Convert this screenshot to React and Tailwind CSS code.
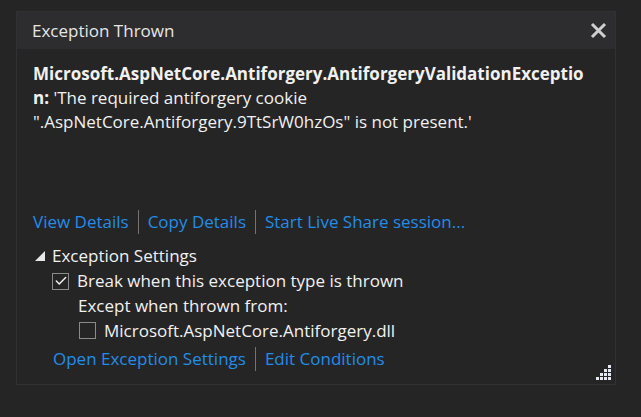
import { Check } from 'lucide-react'

const FONT = { fontFamily: '"Open Sans", "Noto Sans", sans-serif' }

function Sep() {
  return <span className="mx-[9px] inline-block h-[24px] w-px bg-[#737373]" />
}

function Link({ children }) {
  return <span className="text-[#228de9]">{children}</span>
}

function Grip() {
  // little resize dots, 4 rows
  const dots = []
  for (let r = 0; r < 4; r++) {
    for (let c = 3 - r; c < 4; c++) {
      dots.push(<rect key={`${r}-${c}`} x={c * 4} y={r * 4} width="3" height="3" fill="#e4e8f0" />)
    }
  }
  return (
    <svg width="15" height="15" viewBox="0 0 15 15" className="absolute right-[4px] bottom-[4px]">
      {dots}
    </svg>
  )
}

export default function App() {
  return (
    <div className="w-[641px] h-[417px] bg-[#252526] pt-[11px] pl-[16px]" style={FONT}>
      <div className="relative w-[600px] h-[374px] border border-[#313135] bg-[#252526] text-[17px] text-[#f1f1f1]">
        {/* title bar */}
        <div className="flex h-[37px] items-center justify-between bg-[#2d2d30] pl-[15px] pr-[8px]">
          <span className="text-[17px] text-[#e6e6e6]">Exception Thrown</span>
          <svg width="17" height="17" viewBox="0 0 17 17">
            <path d="M2 2 L15 15 M15 2 L2 15" stroke="#cfcfcf" strokeWidth="3" />
          </svg>
        </div>

        {/* message */}
        <div className="pl-[16px] pt-[13px] leading-[24px]">
          <div className="font-bold">Microsoft.AspNetCore.Antiforgery.AntiforgeryValidationExceptio</div>
          <div>
            <span className="font-bold">n:</span> 'The required antiforgery cookie
          </div>
          <div>".AspNetCore.Antiforgery.9TtSrW0hzOs" is not present.'</div>
        </div>

        {/* links */}
        <div className="mt-[76px] flex items-center pl-[16px] leading-[24px]">
          <Link>View Details</Link>
          <Sep />
          <Link>Copy Details</Link>
          <Sep />
          <Link>Start Live Share session...</Link>
        </div>

        {/* settings */}
        <div className="mt-[10px] flex items-center pl-[18px] leading-[24px]">
          <svg width="10" height="10" viewBox="0 0 10 10" className="mr-[7px]">
            <polygon points="10,0 10,10 0,10" fill="#e8e8e8" />
          </svg>
          <span>Exception Settings</span>
        </div>

        <div className="mt-px flex items-center pl-[35px] leading-[24px]">
          <span className="mr-[8px] flex h-[17px] w-[17px] items-center justify-center border border-[#8a8a8a] bg-[#252526]">
            <Check size={14} strokeWidth={2.5} className="text-[#f1f1f1]" />
          </span>
          <span>Break when this exception type is thrown</span>
        </div>

        <div className="mt-px pl-[61px] leading-[24px]">Except when thrown from:</div>

        <div className="mt-px flex items-center pl-[62px] leading-[23px]">
          <span className="mr-[8px] h-[17px] w-[17px] border border-[#8a8a8a]" />
          <span>Microsoft.AspNetCore.Antiforgery.dll</span>
        </div>

        <div className="mt-[5px] flex items-center pl-[36px] leading-[24px]">
          <Link>Open Exception Settings</Link>
          <Sep />
          <Link>Edit Conditions</Link>
        </div>

        <Grip />
      </div>
    </div>
  )
}
